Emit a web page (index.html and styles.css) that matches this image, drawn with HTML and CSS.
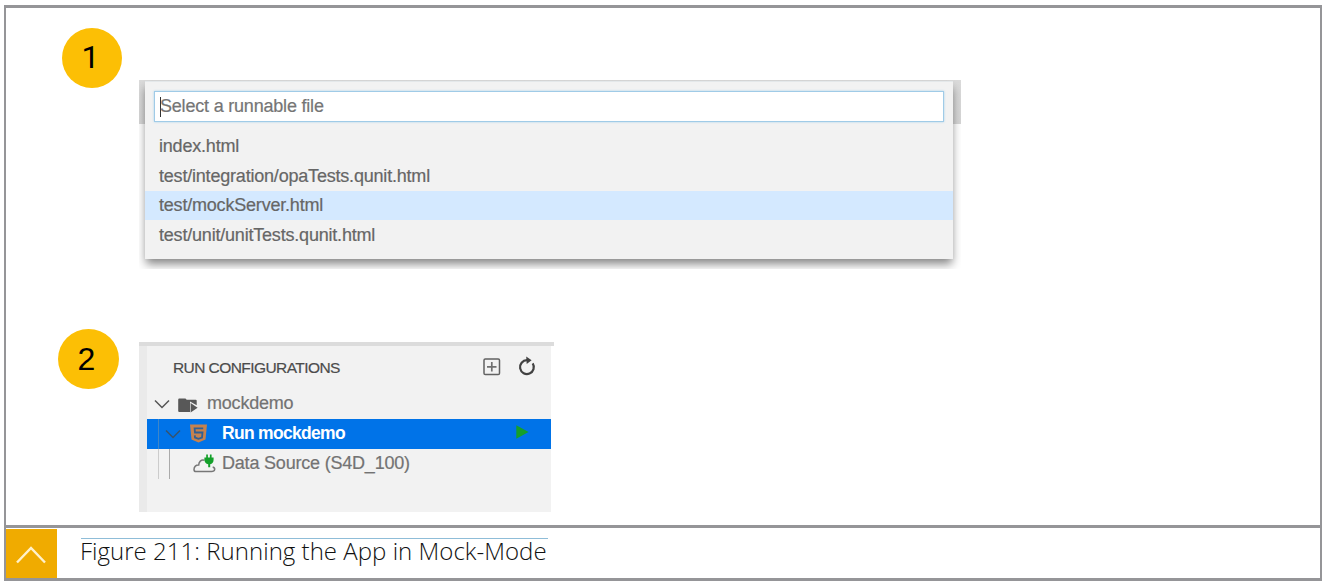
FILE: index.html
```html
<!DOCTYPE html>
<html lang="en">
<head>
<meta charset="utf-8">
<title>Running the App in Mock-Mode</title>
<link rel="stylesheet" href="styles.css">
</head>
<body>
<figure class="frame">
  <div class="steps">
    <section class="step step-one">
      <span class="badge">1</span>
      <div class="picker-shot">
        <div class="picker">
          <div class="search"><span class="caret"></span><span class="t t-search">Select a runnable file</span></div>
          <ul class="files">
            <li><span class="t">index.html</span></li>
            <li><span class="t">test/integration/opaTests.qunit.html</span></li>
            <li class="selected"><span class="t">test/mockServer.html</span></li>
            <li><span class="t">test/unit/unitTests.qunit.html</span></li>
          </ul>
        </div>
      </div>
    </section>
    <section class="step step-two">
      <span class="badge badge-two">2</span>
      <div class="run-shot">
        <div class="run-panel">
          <header class="run-head">
            <span class="t t-head">RUN CONFIGURATIONS</span>
            <svg class="ic-add" width="18" height="18" viewBox="0 0 18 18"><rect x="1" y="1" width="15.5" height="15.5" rx="1.3" fill="none" stroke="#626262" stroke-width="1.5"/><path d="M8.8 4v9.5M4 8.8h9.5" stroke="#707070" stroke-width="1.7"/></svg>
            <svg class="ic-refresh" width="18" height="20" viewBox="0 0 18 20"><path d="M9 4.2A6.9 6.9 0 1 0 14.7 7.3" fill="none" stroke="#424242" stroke-width="2.2"/><path d="M8.2 .5L13.6 4.3L8.7 8z" fill="#424242"/></svg>
          </header>
          <div class="row row-root">
            <svg class="chev" width="16" height="10" viewBox="0 0 16 10"><path d="M1 1.5l7 7 7-7" fill="none" stroke="#555" stroke-width="1.5"/></svg>
            <svg class="ic-folder" width="20" height="15" viewBox="0 0 20 15"><path d="M1.3 .6h6.2l1.2 1.2h9q1 0 1 1v4.4L12 3.6v10.5H1.3Q.2 14.1.2 13V1.7Q.2.6 1.3.6z" fill="#585858"/><path d="M12.6 4.9l7 4.9-7 4.8z" fill="#585858"/></svg>
            <span class="t t-root">mockdemo</span>
          </div>
          <div class="row row-run">
            <svg class="chev" width="16" height="10" viewBox="0 0 16 10"><path d="M1 1.5l7 7 7-7" fill="none" stroke="#36536e" stroke-width="1.5"/></svg>
            <svg class="ic-html" width="17" height="19" viewBox="0 0 17 19"><path d="M0 .4h17l-1.5 15.1L8.5 18.6l-7-3.1z" fill="#c5824f"/><path d="M13.2 4.3H4.6l.4 4.2h7.5l-.5 5-3.5 1.4-3.5-1.4-.2-2.1" fill="none" stroke="#315f93" stroke-width="1.8"/></svg>
            <span class="t t-run">Run mockdemo</span>
            <svg class="ic-play" width="13" height="14" viewBox="0 0 13 14"><path d="M.3.3L12.6 7 .3 13.7z" fill="#159f2a"/></svg>
          </div>
          <div class="row row-data">
            <svg class="ic-cloud" width="23" height="19" viewBox="0 0 23 19"><path d="M11.5 6.3C8 5.2 5.8 8 5.7 11 3 10.8 1 12.6 1 15.4 1 16.8 1.8 17.6 3 17.6h15.5c4 0 4.1-4 1.2-4.7" fill="none" stroke="#777" stroke-width="1.5"/><path d="M11.4 3.5h1.8V.6h1.7v2.9h2V.6h1.7v2.9h2v2c0 3-1.3 4.4-3.4 4.8v3h-2v-3c-2.3-.5-3.8-2-3.8-4.8z" fill="#14a02a"/></svg>
            <span class="t t-data">Data Source (S4D_100)</span>
          </div>
        </div>
      </div>
    </section>
  </div>
  <figcaption class="caption">
    <span class="up"><svg width="32" height="20" viewBox="0 0 32 20"><path d="M2 17.5L16 3l14 14.5" fill="none" stroke="#fff1cb" stroke-width="2.4"/></svg></span>
    <span class="caption-text">Figure 211: Running the App in Mock-Mode</span>
  </figcaption>
</figure>
</body>
</html>
```
FILE: styles.css
```css
* { box-sizing: border-box; }
body {
  margin: 0;
  width: 1324px;
  height: 583px;
  overflow: hidden;
  background: #fff;
  font-family: "Liberation Sans", Arial, sans-serif;
}
svg { display: block; flex: none; }
.t { white-space: nowrap; letter-spacing: -.2px; -webkit-text-stroke: .2px; }
.frame {
  margin: 5px 3px 2px 4px;
  width: 1318px;
  height: 576px;
  border: 3px solid #959598;
  border-width: 3px 2px 3px 2px;
  display: flex;
  flex-direction: column;
}
.steps { height: 517px; flex: none; }
.step { display: flex; align-items: flex-start; }
.step-one { padding: 20px 0 0 56px; height: 334px; }
.step-two { padding-left: 52px; }
.badge {
  flex: none;
  width: 60px;
  height: 60px;
  border-radius: 50%;
  background: #fcbf05;
  color: #000;
  font: 32px/58px Roboto, sans-serif;
  text-align: center;
  padding-right: 3px;
}
.badge-two {
  width: 61px;
  height: 60px;
  margin-top: -13px;
  font: 32px/60px "Liberation Sans", Arial, sans-serif;
  padding-right: 4px;
}

.picker-shot {
  margin: 52px 0 0 17px;
  width: 822px;
  height: 189px;
  padding: 1px 8px 0 6px;
  overflow: hidden;
  background: linear-gradient(#dadada, #d6d6d6) 0 0 / 100% 44px no-repeat;
}
.picker {
  height: 178px;
  background: #f2f2f2;
  border-top: 1px solid #e4e8ea;
  box-shadow: 0 6px 9px -1px rgba(0, 0, 0, .48);
  padding: 9px 9px 0;
}
.search {
  display: flex;
  align-items: center;
  height: 31px;
  border: 1px solid #a0cbe7;
  background: #fff;
  padding-left: 5px;
  color: #757575;
  font-size: 18px;
  box-shadow: 0 0 2px #a8d2ec;
}
.caret { width: 1px; height: 20px; background: #333; margin-right: -1px; }
.files { list-style: none; margin: 9px -9px 0; padding: 0; }
.files li { height: 29.8px; padding-left: 14px; font-size: 18px; line-height: 30px; color: #666; }
.files .selected { background: #d4e9ff; line-height: 29px; }

.run-shot {
  margin-left: 20px;
  width: 415px;
  height: 170px;
  border-top: 4px solid #dcdcdc;
  padding: 0 3px 0 8px;
  background: linear-gradient(90deg, #eaeaea 8px, #fff 8px);
}
.run-panel { height: 166px; background: #f2f2f2; }
.run-head { display: flex; align-items: center; height: 43px; padding: 0 15px 0 26px; color: #4c4c4c; font-size: 15.5px; }
.t-head { letter-spacing: -.57px; }
.ic-add { margin-left: auto; margin-top: -2px; }
.ic-refresh { margin: -3px 0 0 17px; }
.row { display: flex; align-items: center; height: 30px; font-size: 18px; color: #737373; }
.row .t { margin-top: -1px; }
.row-root { padding-left: 7px; }
.ic-folder { margin: 2px 9px 0 8px; }
.row-run {
  padding: 0 22px 0 18px;
  color: #fff;
  font-weight: bold;
  background: linear-gradient(#3e86c8, #3e86c8) 11px 0 / 1px 100% no-repeat, #0073e8;
}
.t-run { font-size: 17.5px; letter-spacing: -.7px; -webkit-text-stroke: 0; }
.ic-html { margin: -1px 15px 0 9px; }
.ic-play { margin: -4px 0 0 auto; }
.row-data {
  padding-left: 46px;
  background:
    linear-gradient(#ccc, #ccc) 11px 0 / 1px 100% no-repeat,
    linear-gradient(#aaa, #aaa) 22px 0 / 1px 100% no-repeat;
}
.ic-cloud { margin: -2px 6px 0 0; }

.caption { display: flex; height: 53px; border-top: 3px solid #959598; }
.up { width: 51px; height: 49px; margin-top: 1px; padding: 2px 1px 0 0; background: #f0ab00; display: flex; justify-content: center; align-items: center; }
.caption-text {
  margin: 10px 0 0 24px;
  width: 467px;
  height: 27px;
  border-top: 1px solid #8fbdd8;
  color: #111;
  font: 300 24px/24px "Open Sans", sans-serif;
  letter-spacing: .03px;
  text-indent: -1px;
  white-space: nowrap;
}
```
